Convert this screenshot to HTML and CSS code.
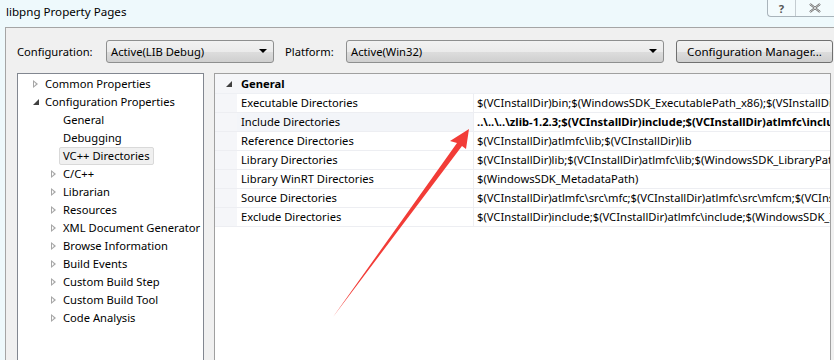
FILE: index.html
```html
<!DOCTYPE html>
<html lang="en">
<head>
    <meta charset="UTF-8">
    <title>libpng Property Pages</title>
    <link rel="stylesheet" href="styles.css">
</head>
<body>

<div class="window">
    <!-- Title bar -->
    <div class="titlebar">
        <span class="title">libpng Property Pages</span>
        <div class="caption-buttons">
            <span class="cap-btn help">?</span>
            <span class="cap-btn close">
                <svg width="12" height="10" viewBox="0 0 12 10"><path d="M1 1 L11 9 M11 1 L1 9" stroke="#555" stroke-width="2.2" fill="none"/><path d="M1 1 L11 9 M11 1 L1 9" stroke="#fff" stroke-width="0.8" fill="none"/></svg>
            </span>
        </div>
    </div>

    <div class="dialog">
        <!-- Configuration toolbar -->
        <div class="toolbar">
            <label class="tb-label">Configuration:</label>
            <div class="combo combo-config">
                <span>Active(LIB Debug)</span>
                <span class="combo-arrow"></span>
            </div>
            <label class="tb-label tb-platform">Platform:</label>
            <div class="combo combo-platform">
                <span>Active(Win32)</span>
                <span class="combo-arrow"></span>
            </div>
            <button class="btn">Configuration Manager...</button>
        </div>

        <div class="panes">
            <!-- Tree -->
            <ul class="tree">
                <li class="node lvl0"><span class="tw closed"></span>Common Properties</li>
                <li class="node lvl0"><span class="tw open"></span>Configuration Properties</li>
                <li class="node lvl1"><span class="tw none"></span>General</li>
                <li class="node lvl1"><span class="tw none"></span>Debugging</li>
                <li class="node lvl1"><span class="tw none"></span><span class="selected">VC++ Directories</span></li>
                <li class="node lvl1"><span class="tw closed"></span>C/C++</li>
                <li class="node lvl1"><span class="tw closed"></span>Librarian</li>
                <li class="node lvl1"><span class="tw closed"></span>Resources</li>
                <li class="node lvl1"><span class="tw closed"></span>XML Document Generator</li>
                <li class="node lvl1"><span class="tw closed"></span>Browse Information</li>
                <li class="node lvl1"><span class="tw closed"></span>Build Events</li>
                <li class="node lvl1"><span class="tw closed"></span>Custom Build Step</li>
                <li class="node lvl1"><span class="tw closed"></span>Custom Build Tool</li>
                <li class="node lvl1"><span class="tw closed"></span>Code Analysis</li>
            </ul>

            <!-- Property grid -->
            <div class="grid">
                <div class="cat-row">
                    <span class="tw open cat-tw"></span>
                    <span class="cat-name">General</span>
                </div>
                <div class="prop-row">
                    <div class="gutter"></div>
                    <div class="prop-name">Executable Directories</div>
                    <div class="prop-value">$(VCInstallDir)bin;$(WindowsSDK_ExecutablePath_x86);$(VSInstallDir)Common7\Tools\bin;$(VSInstallDir)Common7\tools</div>
                </div>
                <div class="prop-row hl">
                    <div class="gutter"></div>
                    <div class="prop-name">Include Directories</div>
                    <div class="prop-value bold">..\..\..\zlib-1.2.3;$(VCInstallDir)include;$(VCInstallDir)atlmfc\include;$(WindowsSDK_IncludePath)</div>
                </div>
                <div class="prop-row">
                    <div class="gutter"></div>
                    <div class="prop-name">Reference Directories</div>
                    <div class="prop-value">$(VCInstallDir)atlmfc\lib;$(VCInstallDir)lib</div>
                </div>
                <div class="prop-row">
                    <div class="gutter"></div>
                    <div class="prop-name">Library Directories</div>
                    <div class="prop-value">$(VCInstallDir)lib;$(VCInstallDir)atlmfc\lib;$(WindowsSDK_LibraryPath_x86)</div>
                </div>
                <div class="prop-row">
                    <div class="gutter"></div>
                    <div class="prop-name">Library WinRT Directories</div>
                    <div class="prop-value">$(WindowsSDK_MetadataPath)</div>
                </div>
                <div class="prop-row">
                    <div class="gutter"></div>
                    <div class="prop-name">Source Directories</div>
                    <div class="prop-value">$(VCInstallDir)atlmfc\src\mfc;$(VCInstallDir)atlmfc\src\mfcm;$(VCInstallDir)atlmfc\src\atl</div>
                </div>
                <div class="prop-row">
                    <div class="gutter"></div>
                    <div class="prop-name">Exclude Directories</div>
                    <div class="prop-value">$(VCInstallDir)include;$(VCInstallDir)atlmfc\include;$(WindowsSDK_IncludePath)</div>
                </div>
                <div class="grid-rest"></div>
            </div>
        </div>
    </div>

    <!-- Red annotation arrow -->
    <svg class="annotation" width="834" height="360" viewBox="0 0 834 360">
        <polygon points="469,129 450,141 457,143 333,317 462,146 466,149" fill="#f23c37"/>
    </svg>
</div>

</body>
</html>
```

FILE: styles.css
```css
/* General reset */
* {
    margin: 0;
    padding: 0;
    box-sizing: border-box;
}

body {
    font-family: 'Segoe UI', 'Noto Sans', sans-serif;
    font-size: 11.2px;
    color: #000;
    background-color: #eef9fc;
    width: 834px;
    height: 360px;
    overflow: hidden;
}

.window {
    position: relative;
    height: 360px;
    display: flex;
    flex-direction: column;
}

/* Title bar */
.titlebar {
    height: 27px;
    display: flex;
    justify-content: space-between;
    align-items: flex-start;
}

.title {
    padding-left: 6px;
    padding-top: 4px;
    line-height: 16px;
    font-size: 11.6px;
}

.caption-buttons {
    display: flex;
    height: 17px;
    border: 1px solid #a9b4bb;
    border-top: none;
    border-right: none;
    border-bottom-left-radius: 4px;
    background-color: #f3fbfd;
}

.cap-btn {
    display: flex;
    align-items: center;
    justify-content: center;
    color: #555;
    font-weight: bold;
}

.help {
    width: 28px;
    border-right: 1px solid #c4ccd1;
}

.close {
    width: 38px;
}

/* Dialog body */
.dialog {
    flex: 1;
    margin-left: 5px;
    background-color: #f0f0f0;
    border-top: 1px solid #a5a5a5;
    border-left: 1px solid #a5a5a5;
    display: flex;
    flex-direction: column;
    min-height: 0;
}

.toolbar {
    display: flex;
    align-items: center;
    height: 45px;
    padding-top: 1px;
    padding-left: 11px;
}

.tb-label {
    width: 89px;
}

.tb-platform {
    width: 61px;
    margin-left: 11px;
}

.combo {
    height: 23px;
    border: 1px solid #8e8f8f;
    border-radius: 3px;
    background: linear-gradient(#f2f2f2 0%, #ebebeb 50%, #dddddd 51%, #cfcfcf 100%);
    display: flex;
    align-items: center;
    justify-content: space-between;
    padding: 0 6px 0 4px;
}

.combo-config {
    width: 168px;
}

.combo-platform {
    width: 318px;
}

.combo-arrow {
    width: 0;
    height: 0;
    border-left: 4px solid transparent;
    border-right: 4px solid transparent;
    border-top: 4px solid #000;
}

.btn {
    margin-left: 12px;
    width: 157px;
    height: 23px;
    margin-top: 1px;
    font-family: inherit;
    font-size: 11.6px;
    border: 1px solid #707070;
    border-radius: 3px;
    background: linear-gradient(#f2f2f2 0%, #ebebeb 50%, #dddddd 51%, #cfcfcf 100%);
}

/* Panes */
.panes {
    flex: 1;
    display: flex;
    min-height: 0;
    padding-left: 11px;
}

.tree {
    list-style: none;
    width: 187px;
    background-color: #fff;
    border: 1px solid #828790;
    border-bottom: none;
    padding-top: 1px;
}

.node {
    height: 18px;
    line-height: 18px;
    display: flex;
    align-items: center;
    white-space: nowrap;
}

.lvl0 {
    padding-left: 11px;
}

.lvl1 {
    padding-left: 29px;
}

.tw {
    width: 16px;
    height: 18px;
    flex: none;
    position: relative;
}

.tw.closed::before {
    content: '';
    position: absolute;
    left: 4px;
    top: 5px;
    border-left: 5px solid #a6a6a6;
    border-top: 4px solid transparent;
    border-bottom: 4px solid transparent;
}

.tw.closed::after {
    content: '';
    position: absolute;
    left: 5px;
    top: 7px;
    border-left: 2px solid #fff;
    border-top: 2px solid transparent;
    border-bottom: 2px solid transparent;
}

.tw.open::before {
    content: '';
    position: absolute;
    left: 4px;
    top: 6px;
    border-right: 6px solid #404040;
    border-top: 6px solid transparent;
}

.selected {
    margin-left: -4px;
    padding: 0 3px;
    line-height: 16px;
    background-color: #f0f0f0;
    border: 1px solid #d9d9d9;
    border-radius: 2px;
}

/* Property grid */
.grid {
    flex: 1;
    margin-left: 10px;
    margin-right: 3px;
    background-color: #fff;
    border: 1px solid #a0a0a0;
    border-bottom: none;
    display: flex;
    flex-direction: column;
    overflow: hidden;
}

.cat-row {
    height: 20px;
    flex: none;
    display: flex;
    align-items: center;
    background-color: #f5f6f9;
    border-bottom: 1px solid #eef0f4;
    padding-left: 7px;
}

.cat-tw {
    width: 19px;
}

.cat-name {
    font-weight: bold;
}

.prop-row {
    height: 19px;
    flex: none;
    display: flex;
    border-bottom: 1px solid #edeef2;
}

.gutter {
    width: 22px;
    flex: none;
    background-color: #f5f6f9;
}

.prop-name {
    width: 237px;
    flex: none;
    padding-left: 4px;
    line-height: 18px;
    border-right: 1px solid #edeef2;
    white-space: nowrap;
}

.prop-value {
    flex: 1;
    padding-left: 3px;
    line-height: 18px;
    white-space: nowrap;
    overflow: hidden;
}

.bold {
    font-weight: bold;
}

.hl .prop-name {
    background-color: #f3f5f9;
}

.grid-rest {
    flex: 1;
}

/* Annotation overlay */
.annotation {
    position: absolute;
    left: 0;
    top: 0;
    pointer-events: none;
}
```
